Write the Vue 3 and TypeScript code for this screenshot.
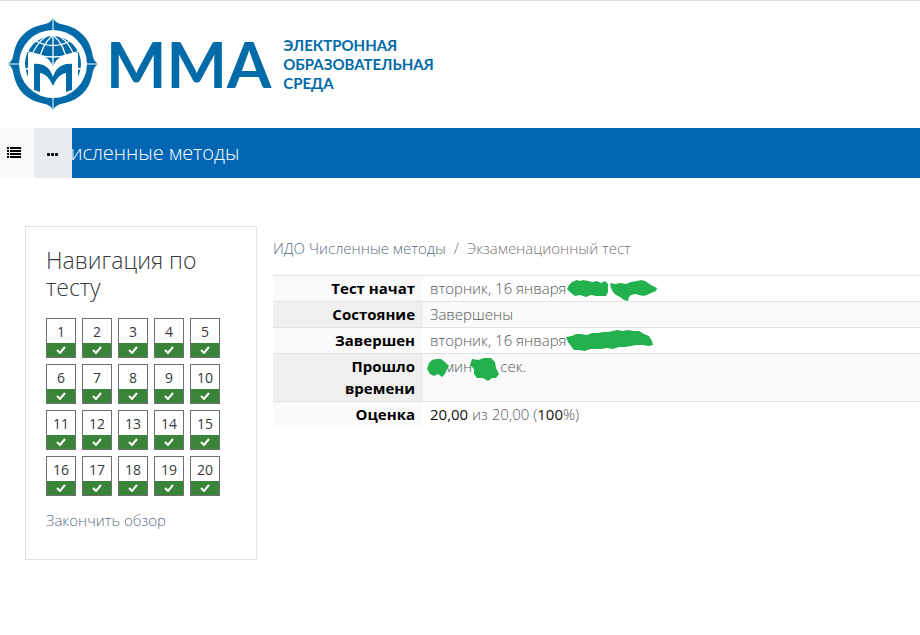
<script setup lang="ts">
const questions: number[] = Array.from({ length: 20 }, (_, i) => i + 1)
</script>

<template>
  <div class="page">
    <header class="header">
      <a class="brand" href="#" aria-label="ММА">
        <svg class="emblem" viewBox="0 0 90 94" aria-hidden="true">
          <path fill="#006ba8" d="M45 1C47 5 51 7 57 8C71 11 81 21 84 35C85 41 86 44 90 47C86 50 85 53 84 59C81 73 71 83 57 86C51 87 47 89 45 93C43 89 39 87 33 86C19 83 9 73 6 59C5 53 4 50 0 47C4 44 5 41 6 35C9 21 19 11 33 8C39 7 43 5 45 1Z" />
          <path stroke="#fff" stroke-width="1" d="M45 0V94M0 47H90" />
          <circle cx="45" cy="47" r="34" fill="#fff" />
          <circle cx="45" cy="47" r="28" fill="#006ba8" />
          <g fill="none" stroke="#fff" stroke-width="1.3">
            <path d="M45 18V48M28 24Q45 33 62 24M19 34Q45 46 71 34M16 52H22M68 52H74" />
            <path d="M45 18Q33 28 31 46M45 18Q57 28 59 46M41 18Q25 26 20 52M49 18Q65 26 70 52" />
          </g>
          <path fill="#fff" d="M20 36C31 35 41 40 45 49C49 40 59 35 70 36V69L58 78H32L20 69Z" />
          <path fill="#006ba8" d="M26 47C36 46 42 51 45 60C48 51 54 46 64 47V73L58 75V56C52 57 48 62 45 69C42 62 38 57 32 56V75L26 73Z" />
        </svg>
        <span class="brand-name">ММА</span>
        <span class="brand-tag">ЭЛЕКТРОННАЯ<br />ОБРАЗОВАТЕЛЬНАЯ<br />СРЕДА</span>
      </a>
    </header>

    <div class="bar">
      <h1 class="bar-title">Численные методы</h1>
      <div class="bar-tools">
        <button class="tool list" type="button" aria-label="Список">
          <svg width="14" height="12" viewBox="0 0 14 12" aria-hidden="true">
            <path d="M0 0h2v2H0zM3 0h11v2H3zM0 3h2v2H0zM3 3h11v2H3zM0 6h2v2H0zM3 6h11v2H3zM0 9h2v2H0zM3 9h11v2H3z" />
          </svg>
        </button>
        <button class="tool more" type="button" aria-label="Ещё">
          <svg width="12" height="4" viewBox="0 0 12 4" aria-hidden="true">
            <rect width="3" height="3" rx="1" /><rect x="4" width="3" height="3" rx="1" /><rect x="8" width="3" height="3" rx="1" />
          </svg>
        </button>
      </div>
    </div>

    <div class="content">
      <aside class="card">
        <h2 class="card-title">Навигация по тесту</h2>
        <nav class="grid">
          <a v-for="n in questions" :key="n" class="cell" href="#">
            <span class="num">{{ n }}</span>
            <span class="state">
              <svg width="10" height="8" viewBox="0 0 10 8" aria-hidden="true">
                <path d="M1 4L4 7L9 1" fill="none" stroke="#fff" stroke-width="2" />
              </svg>
            </span>
          </a>
        </nav>
        <a class="finish" href="#">Закончить обзор</a>
      </aside>

      <main class="main">
        <nav class="crumbs">
          <a href="#">ИДО Численные методы</a>
          <span class="sep">/</span>
          <a class="current" href="#">Экзаменационный тест</a>
        </nav>
        <table class="summary">
          <tbody>
            <tr>
              <th scope="row">Тест начат</th>
              <td>вторник, 16 января<svg class="mark" width="92" height="26" viewBox="0 0 92 26" aria-hidden="true">
                <path d="M0 12L2 8L5 5L10 3L13 4L16 3L21 4L26 5L30 4L34 6L38 4L41 7L41 15L39 19L34 19L29 19L24 18L19 20L13 18L8 19L4 16ZM43 6L48 7L54 6L59 7L64 5L70 4L74 3L78 4L81 6L84 8L90 11L89 14L84 16L80 18L76 19L72 18L68 17L64 18L62 20L61 24L57 23L53 20L49 18L46 15L44 11Z" />
              </svg></td>
            </tr>
            <tr>
              <th scope="row">Состояние</th>
              <td>Завершены</td>
            </tr>
            <tr>
              <th scope="row">Завершен</th>
              <td>вторник, 16 января<svg class="mark" width="92" height="26" viewBox="0 0 92 26" aria-hidden="true">
                <path d="M-1 8L5 7L9 5L14 5L20 6L25 4L31 4L36 3L41 3L46 2L50 1L56 2L61 1L67 2L72 2L77 5L82 7L85 12L86 16L82 17L76 16L69 16L64 17L58 18L52 18L46 20L40 19L34 20L28 20L23 20L18 22L12 21L7 21L4 17L1 13Z" />
              </svg></td>
            </tr>
            <tr>
              <th scope="row">Прошло времени</th>
              <td><svg class="mark first" width="24" height="26" viewBox="0 0 24 26" aria-hidden="true">
                <path d="M0 14L2 8L5 5L9 4L14 4L18 7L22 11L19 16L18 19L15 22L11 19L7 21L3 19Z" />
              </svg>мин<svg class="mark second" width="30" height="26" viewBox="0 0 30 26" aria-hidden="true">
                <path d="M2 4L8 5L14 3L21 3L25 7L26 13L29 19L26 23L22 23L18 26L13 23L7 23L4 19L4 14L0 10Z" />
              </svg>сек.</td>
            </tr>
            <tr>
              <th scope="row">Оценка</th>
              <td><b>20,00</b> из 20,00 (<b>100</b>%)</td>
            </tr>
          </tbody>
        </table>
      </main>
    </div>
  </div>
</template>

<style>
body {
  margin: 0;
  background: #fff;
}
</style>

<style scoped>
.page {
  border-top: 1px solid #dcdcdc;
  font: 300 15px/22px "Open Sans", "Noto Sans", sans-serif;
  color: #373a3c;
}
a {
  color: #5c6f82;
  text-decoration: none;
}
.header {
  display: flex;
  padding: 16px 8px 17px;
}
.brand {
  display: flex;
  align-items: center;
  color: #006ba8;
}
.emblem {
  width: 90px;
  height: 94px;
}
.brand-name {
  margin-left: 8px;
  font: 700 64px/90px Lato, sans-serif;
}
.brand-tag {
  margin-left: 12px;
  font: 700 15px/19px Lato, sans-serif;
}
.bar {
  position: relative;
  height: 50px;
  display: flex;
  align-items: center;
  background: #0066b3;
}
.bar-title {
  margin: 0;
  padding-left: 57px;
  font-size: 20px;
  font-weight: 300;
  color: #fff;
}
.bar-tools {
  position: absolute;
  inset: 0 auto 0 0;
  display: flex;
}
.tool {
  display: flex;
  align-items: center;
  justify-content: center;
  padding: 0;
  border: 0;
}
.list {
  width: 34px;
  padding-right: 6px;
  background: #f8f9fb;
}
.more {
  width: 38px;
  padding-top: 4px;
  background: #e9ecef;
}
.content {
  display: flex;
  align-items: flex-start;
  gap: 16px;
  padding: 48px 0 48px 25px;
}
.card {
  box-sizing: border-box;
  flex: 0 0 232px;
  padding: 20px 20px 28px;
  border: 1px solid #e2e2e2;
}
.card-title {
  margin: 0 0 17px;
  font-size: 23px;
  line-height: 27px;
  font-weight: 300;
}
.grid {
  display: flex;
  flex-wrap: wrap;
  gap: 6px;
}
.cell {
  box-sizing: border-box;
  width: 30px;
  height: 40px;
  display: flex;
  flex-direction: column;
  border: 1px solid #6f6f6f;
  font-size: 14px;
  font-weight: 400;
  line-height: 26px;
  text-align: center;
  color: #373a3c;
}
.num {
  height: 24px;
}
.state {
  flex: 1;
  display: flex;
  align-items: center;
  justify-content: center;
  background: #398439;
}
.finish {
  display: block;
  margin-top: 13px;
}
.main {
  flex: 1;
  min-width: 0;
}
.crumbs {
  display: flex;
  gap: 8px;
  padding: 11px 0 16px;
}
.sep,
.current {
  color: #77736f;
}
.summary {
  width: 100%;
  border-spacing: 0;
}
.summary th,
.summary td {
  padding: 1px 8px 2px;
  border-top: 1px solid #dee2e6;
  vertical-align: top;
}
.summary th {
  box-sizing: border-box;
  width: 150px;
  padding-left: 32px;
  text-align: right;
  font-weight: 700;
  color: #000;
  background: #fafafa;
}
.summary td {
  padding-left: 7px;
  color: #56595c;
}
.summary tr:nth-child(even) th {
  background: #efefef;
}
.summary tr:nth-child(even) td {
  background: #fafafa;
}
.summary b {
  font-weight: 400;
  color: #111;
}
.mark {
  position: relative;
  margin: 0 0 -4px;
  vertical-align: top;
  overflow: visible;
  fill: #22b14c;
}
.first {
  margin-left: -3px;
  margin-right: -7px;
}
.second {
  margin-left: -2px;
}
</style>
